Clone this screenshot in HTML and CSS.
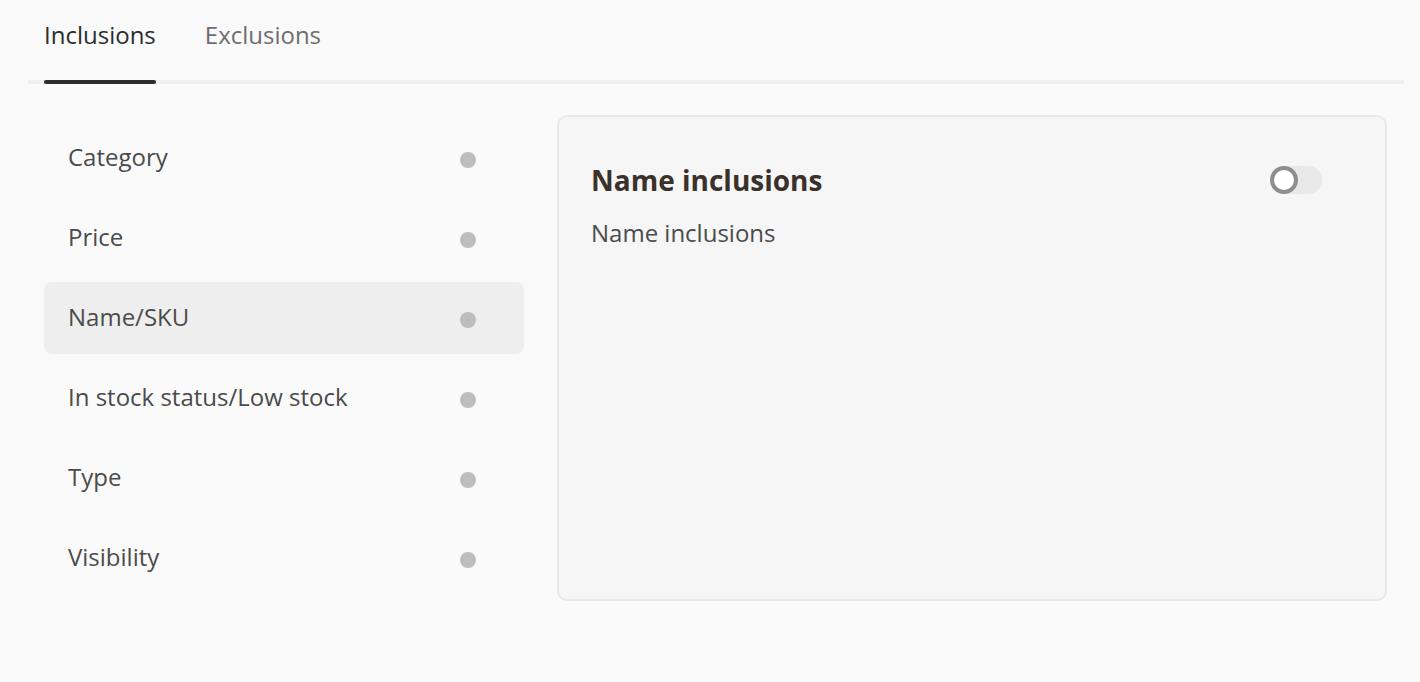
FILE: index.html
```html
<!DOCTYPE html>
<html lang="en">
<head>
<meta charset="utf-8">
<title>Inclusions</title>
<link rel="stylesheet" href="styles.css">
</head>
<body>
<div class="page">
  <nav class="tabs">
    <div class="tab tab-active">Inclusions</div>
    <div class="tab">Exclusions</div>
  </nav>
  <div class="content">
    <ul class="side-list">
      <li class="side-item"><span>Category</span><i class="dot"></i></li>
      <li class="side-item"><span>Price</span><i class="dot"></i></li>
      <li class="side-item side-item-selected"><span>Name/SKU</span><i class="dot"></i></li>
      <li class="side-item"><span>In stock status/Low stock</span><i class="dot"></i></li>
      <li class="side-item"><span>Type</span><i class="dot"></i></li>
      <li class="side-item"><span>Visibility</span><i class="dot"></i></li>
    </ul>
    <section class="panel">
      <div class="panel-head">
        <h2 class="panel-title">Name inclusions</h2>
        <div class="toggle"><span class="knob"></span></div>
      </div>
      <p class="panel-text">Name inclusions</p>
    </section>
  </div>
</div>
</body>
</html>
```
FILE: styles.css
```css
* { box-sizing: border-box; }
html, body {
  margin: 0;
  padding: 0;
  background: #fafafa;
  font-family: "Open Sans", "Liberation Sans", sans-serif;
  color: #4b4b4b;
}
.page {
  width: 1420px;
  height: 682px;
}
.tabs {
  display: flex;
  margin: 0 16px 0 28px;
  padding-left: 16px;
  border-bottom: 4px solid #f0f0f0;
  gap: 49px;
}
.tab {
  position: relative;
  height: 80px;
  padding-top: 20px;
  font-size: 24px;
  line-height: 30px;
  color: #6e6e6e;
}
.tab-active {
  color: #2c2c2c;
}
.tab-active::after {
  content: "";
  position: absolute;
  left: 0;
  right: 0;
  bottom: -4px;
  height: 4px;
  border-radius: 2px;
  background: #2c2c2c;
}
.content {
  display: flex;
  align-items: flex-start;
  padding-left: 44px;
  padding-top: 31px;
}
.side-list {
  list-style: none;
  margin: 7px 0 0 0;
  padding: 0;
  width: 480px;
  display: flex;
  flex-direction: column;
  gap: 8px;
}
.side-item {
  height: 72px;
  display: flex;
  align-items: center;
  justify-content: space-between;
  padding: 0 48px 0 24px;
  border-radius: 8px;
  font-size: 24px;
  line-height: 30px;
  color: #4b4b4b;
}
.side-item span { margin-top: -3px; }
.side-item-selected {
  background: #eeeeee;
}
.dot {
  width: 16px;
  height: 16px;
  border-radius: 50%;
  background: #bdbdbd;
  margin-top: 4px;
}
.panel {
  margin-left: 33px;
  width: 830px;
  height: 486px;
  border: 2px solid #e9e9e9;
  border-radius: 10px;
  background: #f6f6f6;
  padding: 45px 63px 32px 32px;
}
.panel-head {
  display: flex;
  align-items: center;
  justify-content: space-between;
}
.panel-title {
  margin: 0;
  font-size: 28px;
  line-height: 36px;
  font-weight: 700;
  color: #3b312b;
}
.toggle {
  width: 52px;
  height: 28px;
  border-radius: 14px;
  background: #e9e9e9;
  display: flex;
}
.knob {
  width: 28px;
  height: 28px;
  border-radius: 50%;
  border: 4px solid #8e8e8e;
  background: #ffffff;
}
.panel-text {
  margin: 20px 0 0 0;
  font-size: 24px;
  line-height: 30px;
  color: #4b4b4b;
}
```
